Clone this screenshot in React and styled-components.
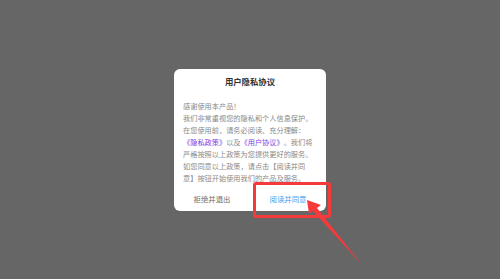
import React from 'react';
import styled, { createGlobalStyle } from 'styled-components';

const GlobalStyle = createGlobalStyle`
  html, body {
    margin: 0;
    padding: 0;
  }
  body {
    font-family: "Noto Sans CJK SC", "Noto Sans", sans-serif;
  }
`;

const Page = styled.div`
  position: relative;
  display: flex;
  align-items: center;
  justify-content: center;
  width: 500px;
  height: 279px;
  background: #666666;
  overflow: hidden;
`;

const Dialog = styled.div`
  position: relative;
  display: flex;
  flex-direction: column;
  width: 152px;
  background: #ffffff;
  border-radius: 6px;
  padding-top: 6px;
  box-sizing: border-box;
`;

const Title = styled.div`
  text-align: center;
  font-size: 8.4px;
  line-height: 12px;
  font-weight: 700;
  color: #333333;
`;

const Body = styled.div`
  margin-top: 13px;
  padding: 0 9px;
  font-size: 7.2px;
  line-height: 12px;
  color: #8a8a8a;
  text-spacing-trim: space-all;
  line-break: strict;

  p {
    margin: 0;
  }
`;

const Link = styled.span`
  color: #7a42e6;
`;

const Actions = styled.div`
  display: flex;
  height: 24px;
  margin-top: 3px;
`;

const Action = styled.button`
  flex: 1;
  border: 0;
  background: transparent;
  padding: 0;
  font-family: inherit;
  font-size: 7.4px;
  color: ${({ $primary }) => ($primary ? '#3d9ef0' : '#6b6b6b')};
  cursor: pointer;
`;

const Highlight = styled.div`
  position: absolute;
  left: 79px;
  top: 113px;
  width: 78px;
  height: 36px;
  border: 3px solid #f43a3a;
  border-radius: 3px;
  box-sizing: border-box;
  pointer-events: none;
`;

const Annotation = styled.svg`
  position: absolute;
  inset: 0;
  pointer-events: none;
`;

const App = () => {
  return (
    <>
      <GlobalStyle />
      <Page>
        <Dialog>
          <Title>用户隐私协议</Title>
          <Body>
            <p>感谢使用本产品！</p>
            <p>
              我们非常重视您的隐私和个人信息保护。在您使用前，请务必阅读、充分理解：
              <Link>《隐私政策》</Link>以及<Link>《用户协议》</Link>。我们将严格按照以上政策为您提供更好的服务。如您同意以上政策，请点击【阅读并同意】按钮开始使用我们的产品及服务。
            </p>
          </Body>
          <Actions>
            <Action>拒绝并退出</Action>
            <Action $primary>阅读并同意</Action>
          </Actions>
          <Highlight />
        </Dialog>
        <Annotation width="500" height="279" viewBox="0 0 500 279">
          <polygon
            points="307,200 321,205 317,208 362,265 313,211 309,214"
            fill="#f43a3a"
          />
        </Annotation>
      </Page>
    </>
  );
};

export default App;
